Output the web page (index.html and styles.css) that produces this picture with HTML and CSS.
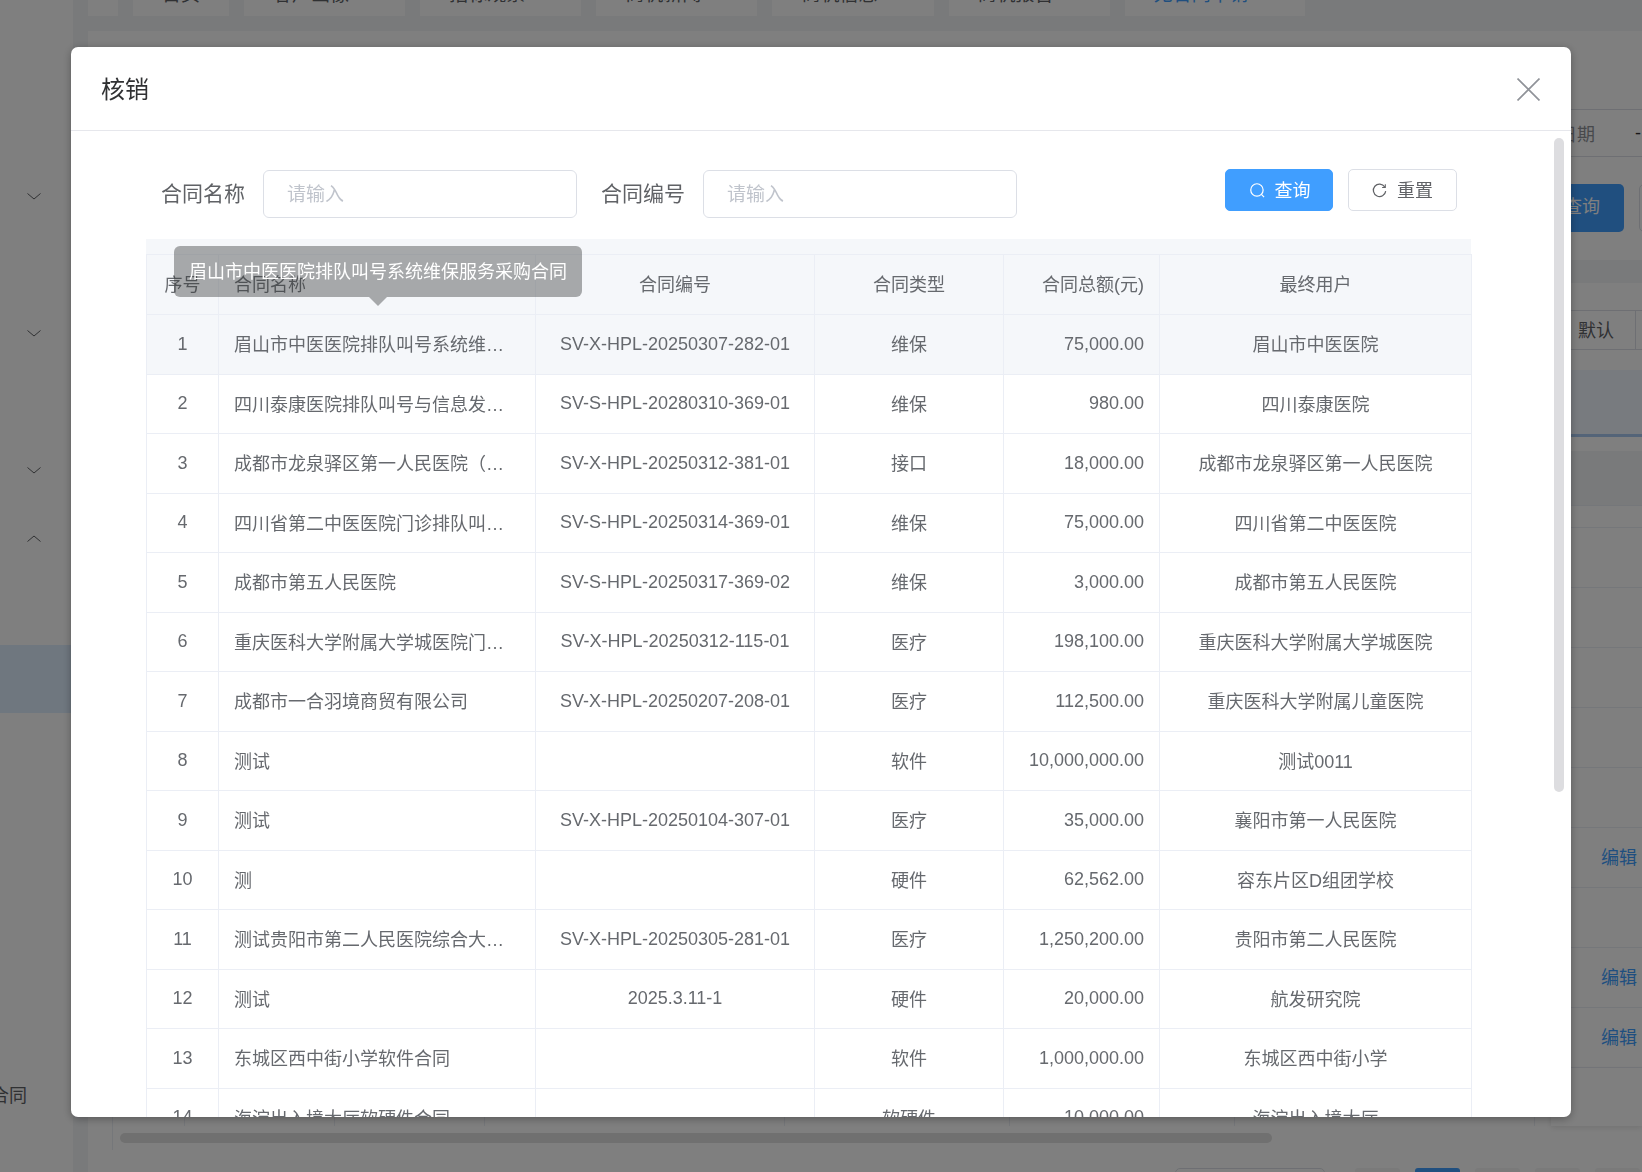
FILE: index.html
```html
<!DOCTYPE html>
<html lang="zh-CN">
<head>
    <meta charset="UTF-8">
    <title>核销</title>
    <link rel="stylesheet" href="styles.css">
</head>
<body>
    <div class="page">
        <aside class="side">
            <div class="menu-item"><svg class="chevron" viewBox="0 0 14 7"><path d="M0.5 0.5 L7 6 L13.5 0.5"/></svg></div>
            <div class="menu-item"></div>
            <div class="menu-item"><svg class="chevron" viewBox="0 0 14 7"><path d="M0.5 0.5 L7 6 L13.5 0.5"/></svg></div>
            <div class="menu-item"></div>
            <div class="menu-item"><svg class="chevron" viewBox="0 0 14 7"><path d="M0.5 0.5 L7 6 L13.5 0.5"/></svg></div>
            <div class="menu-item"><svg class="chevron" viewBox="0 0 14 7"><path d="M0.5 6.5 L7 1 L13.5 6.5"/></svg></div>
            <div class="menu-item"></div>
            <div class="menu-item menu-active"></div>
            <div class="menu-text"><span>合同</span></div>
        </aside>
        <main class="main">
            <div class="tabs">
                <div class="tab tab-arrow">‹</div>
                <div class="tab">首页</div>
                <div class="tab">客户画像<span class="tab-close">×</span></div>
                <div class="tab">招标观察<span class="tab-close">×</span></div>
                <div class="tab">商机新闻<span class="tab-close">×</span></div>
                <div class="tab">商机信息<span class="tab-close">×</span></div>
                <div class="tab">商机报告<span class="tab-close">×</span></div>
                <div class="tab tab-active">无合同申请<span class="tab-close">×</span></div>
            </div>
            <section class="panel">
                <div class="filter-row">
                    <span class="date-box"><span class="date-label">日期</span><span class="date-dash">-</span></span>
                </div>
                <div class="action-row">
                    <span class="back-btn">查询</span>
                    <span class="back-btn-plain"></span>
                </div>
                <div class="band"></div>
                <div class="list">
                    <div class="list-head"><span class="list-head-cell">默认</span></div>
                    <div class="list-selected"></div>
                    <div class="list-dark"></div>
                    <div class="list-gap"></div>
                    <div class="list-row"></div>
                    <div class="list-row"></div>
                    <div class="list-row"></div>
                    <div class="list-row"></div>
                    <div class="list-row"></div>
                    <div class="list-row"><a class="edit">编辑</a></div>
                    <div class="list-row"></div>
                    <div class="list-row"><a class="edit">编辑</a></div>
                    <div class="list-row"><a class="edit">编辑</a></div>
                    <div class="list-foot">
                        <i style="width:72px"></i><i style="width:150px"></i><i style="width:150px"></i><i style="width:300px"></i><i style="width:225px"></i><i style="width:225px"></i><i style="width:300px"></i>
                        <span class="fixed-col"></span>
                    </div>
                    <div class="hscroll"></div>
                </div>
                <div class="pager">
                    <span class="pager-select"></span>
                    <span class="pager-btn"></span>
                    <span class="pager-btn pager-on"></span>
                    <span class="pager-btn"></span>
                    <span class="pager-btn"></span>
                    <span class="pager-btn"></span>
                </div>
            </section>
        </main>
    </div>

    <div class="overlay"></div>

    <div class="dialog">
        <div class="dialog-header">
            <span class="dialog-title">核销</span>
            <svg class="dialog-close" viewBox="0 0 22 22"><path d="M0.5 0.5 L21.5 21.5 M21.5 0.5 L0.5 21.5"/></svg>
        </div>
        <div class="dialog-body">
            <form class="search-form">
                <label class="form-label">合同名称</label>
                <input class="form-input" type="text" placeholder="请输入">
                <label class="form-label form-label-next">合同编号</label>
                <input class="form-input" type="text" placeholder="请输入">
                <div class="form-buttons">
                    <button class="btn btn-primary" type="button">
                        <svg class="btn-icon" viewBox="0 0 16 16"><circle cx="7.4" cy="7.4" r="6.6"/><path d="M12.2 12.2 L15 15"/></svg><span class="btn-text">查询</span>
                    </button>
                    <button class="btn" type="button">
                        <svg class="btn-icon" viewBox="0 0 16 16"><path d="M13.6 4.2 A6.6 6.6 0 1 0 14.6 8.6"/><path class="btn-icon-tip" d="M14.2 1.4 L14.2 4.8 L10.8 4.8"/></svg><span class="btn-text">重置</span>
                    </button>
                </div>
            </form>
            <div class="table-band"></div>
            <table class="contract-table">
                <colgroup>
                    <col class="col-no"><col class="col-name"><col class="col-code"><col class="col-type"><col class="col-amount"><col class="col-user">
                </colgroup>
                <thead>
                    <tr>
                        <th>序号</th>
                        <th class="left">合同名称</th>
                        <th>合同编号</th>
                        <th>合同类型</th>
                        <th class="right">合同总额(元)</th>
                        <th>最终用户</th>
                    </tr>
                </thead>
                <tbody>
                    <tr class="is-hover"><td>1</td><td class="name">眉山市中医医院排队叫号系统维保服务采购合同</td><td>SV-X-HPL-20250307-282-01</td><td>维保</td><td class="right">75,000.00</td><td>眉山市中医医院</td></tr>
                    <tr><td>2</td><td class="name">四川泰康医院排队叫号与信息发布系统维保合同</td><td>SV-S-HPL-20280310-369-01</td><td>维保</td><td class="right">980.00</td><td>四川泰康医院</td></tr>
                    <tr><td>3</td><td class="name">成都市龙泉驿区第一人民医院（排队叫号系统）接口合同</td><td>SV-X-HPL-20250312-381-01</td><td>接口</td><td class="right">18,000.00</td><td>成都市龙泉驿区第一人民医院</td></tr>
                    <tr><td>4</td><td class="name">四川省第二中医医院门诊排队叫号系统维保合同</td><td>SV-S-HPL-20250314-369-01</td><td>维保</td><td class="right">75,000.00</td><td>四川省第二中医医院</td></tr>
                    <tr><td>5</td><td class="name">成都市第五人民医院</td><td>SV-S-HPL-20250317-369-02</td><td>维保</td><td class="right">3,000.00</td><td>成都市第五人民医院</td></tr>
                    <tr><td>6</td><td class="name">重庆医科大学附属大学城医院门诊排队叫号系统合同</td><td>SV-X-HPL-20250312-115-01</td><td>医疗</td><td class="right">198,100.00</td><td>重庆医科大学附属大学城医院</td></tr>
                    <tr><td>7</td><td class="name">成都市一合羽境商贸有限公司</td><td>SV-X-HPL-20250207-208-01</td><td>医疗</td><td class="right">112,500.00</td><td>重庆医科大学附属儿童医院</td></tr>
                    <tr><td>8</td><td class="name">测试</td><td></td><td>软件</td><td class="right">10,000,000.00</td><td>测试0011</td></tr>
                    <tr><td>9</td><td class="name">测试</td><td>SV-X-HPL-20250104-307-01</td><td>医疗</td><td class="right">35,000.00</td><td>襄阳市第一人民医院</td></tr>
                    <tr><td>10</td><td class="name">测</td><td></td><td>硬件</td><td class="right">62,562.00</td><td>容东片区D组团学校</td></tr>
                    <tr><td>11</td><td class="name">测试贵阳市第二人民医院综合大楼排队叫号系统合同</td><td>SV-X-HPL-20250305-281-01</td><td>医疗</td><td class="right">1,250,200.00</td><td>贵阳市第二人民医院</td></tr>
                    <tr><td>12</td><td class="name">测试</td><td>2025.3.11-1</td><td>硬件</td><td class="right">20,000.00</td><td>航发研究院</td></tr>
                    <tr><td>13</td><td class="name">东城区西中街小学软件合同</td><td></td><td>软件</td><td class="right">1,000,000.00</td><td>东城区西中街小学</td></tr>
                    <tr><td>14</td><td class="name">海淀出入境大厅软硬件合同</td><td></td><td>软硬件</td><td class="right">10,000.00</td><td>海淀出入境大厅</td></tr>
                </tbody>
            </table>
        </div>
        <div class="dialog-scroll"></div>
        <div class="tooltip">眉山市中医医院排队叫号系统维保服务采购合同</div>
    </div>
</body>
</html>
```

FILE: styles.css
```css
* {
    box-sizing: border-box;
}
html, body {
    margin: 0;
    height: 100%;
    overflow: hidden;
}
body {
    font-family: "Liberation Sans", "Noto Sans CJK SC", sans-serif;
    color: #606266;
}

/* page behind the dialog */
.page {
    display: flex;
    height: 1172px;
    overflow: hidden;
    background-color: #fff;
}
.side {
    width: 73px;
    flex-shrink: 0;
    padding-top: 162px;
    background-color: #fff;
}
.menu-item {
    display: flex;
    align-items: center;
    height: 68.5px;
    padding-left: 27px;
}
.menu-active {
    margin-top: 3px;
    height: 68px;
    background-color: #deeeff;
}
.menu-text {
    display: flex;
    justify-content: flex-end;
    width: 27px;
    margin-top: 368px;
    font-size: 18px;
    white-space: nowrap;
}
.menu-text span {
    flex-shrink: 0;
}
.chevron {
    width: 14px;
    height: 7px;
    fill: none;
    stroke: #606266;
    stroke-width: 1;
}
.main {
    flex: 1;
    min-width: 0;
    padding-left: 15px;
    background-color: #f2f4f7;
}
.tabs {
    display: flex;
    gap: 15px;
    margin-top: -16px;
}
.tab {
    height: 32px;
    padding: 0 29px;
    line-height: 22px;
    font-size: 19px;
    white-space: nowrap;
    background-color: #fff;
}
.tab-arrow {
    width: 30px;
    padding: 0;
    text-align: center;
}
.tab-active {
    color: #409eff;
}
.tab-close {
    margin-left: 16px;
}
.panel {
    margin-top: 15px;
    height: 1141px;
    padding-top: 78px;
    background-color: #fff;
}
.filter-row {
    display: flex;
    justify-content: flex-end;
    height: 48px;
    border-top: 1px solid #dcdfe6;
    border-bottom: 1px solid #dcdfe6;
}
.date-box {
    display: flex;
    align-items: center;
    font-size: 18px;
    color: #909399;
}
.date-label {
    width: 100px;
    margin-right: 40px;
    text-align: right;
}
.date-dash {
    width: 7px;
    color: #303133;
}
.action-row {
    display: flex;
    justify-content: flex-end;
    gap: 15px;
    margin-top: 27px;
    margin-right: -105px;
}
.back-btn, .back-btn-plain {
    display: block;
    flex-shrink: 0;
    width: 108px;
    height: 48px;
    line-height: 46px;
    padding-right: 24px;
    text-align: right;
    font-size: 18px;
    color: #fff;
    border-radius: 5px;
    background-color: #409eff;
}
.back-btn-plain {
    border: 1px solid #dcdfe6;
    background-color: #fff;
}
.band {
    height: 23px;
    margin-top: 28px;
    background-color: #f2f4f7;
}
.list {
    margin-left: 24px;
    padding-top: 27px;
    height: 867px;
    border-left: 1px solid #ebeef5;
}
.list-head {
    display: flex;
    justify-content: flex-end;
    height: 40px;
    border-top: 1px solid #dcdfe6;
    border-bottom: 1px solid #dcdfe6;
}
.list-head-cell {
    width: 58px;
    height: 38px;
    margin-right: 6px;
    line-height: 40px;
    font-size: 18px;
    border-right: 1px solid #dcdfe6;
}
.list-selected {
    height: 67px;
    margin-top: 20px;
    background-color: #f0f6ff;
    border-bottom: 3px solid #a8c8f0;
}
.list-dark {
    height: 54px;
    margin-top: 14px;
    background-color: #f2f4f7;
}
.list-gap {
    height: 22px;
    border-top: 1px solid #ebeef5;
}
.list-row {
    display: flex;
    align-items: center;
    justify-content: flex-end;
    height: 60px;
    padding: 0 5px 4px 0;
    border-top: 1px solid #ebeef5;
}
.edit {
    font-size: 18px;
    color: #409eff;
}
.list-foot {
    position: relative;
    display: flex;
    height: 58px;
    border-top: 1px solid #ebeef5;
}
.list-foot i {
    display: block;
    flex-shrink: 0;
    height: 58px;
    border-right: 1px solid #ebeef5;
}
.fixed-col {
    position: absolute;
    right: 0;
    top: 0;
    width: 91px;
    height: 58px;
    box-shadow: 0 2px 6px rgba(0, 0, 0, 0.1);
}
.hscroll {
    width: 1152px;
    height: 10px;
    margin: 8px 0 0 7px;
    border-radius: 5px;
    background-color: #e0e0e0;
}
.pager {
    display: flex;
    gap: 15px;
    margin-top: 18px;
    margin-left: 1087px;
}
.pager-select {
    width: 150px;
    height: 40px;
    margin-right: 15px;
    border: 1px solid #dcdfe6;
    border-radius: 5px;
}
.pager-btn {
    flex-shrink: 0;
    width: 45px;
    height: 40px;
    border-radius: 3px;
    background-color: #f4f4f5;
}
.pager-on {
    background-color: #409eff;
}

.overlay {
    position: fixed;
    inset: 0;
    background-color: rgba(0, 0, 0, 0.5);
}

/* dialog */
.dialog {
    position: fixed;
    left: 71px;
    top: 47px;
    width: 1500px;
    height: 1070px;
    overflow: hidden;
    border-radius: 7px;
    background-color: #fff;
    box-shadow: 0 2px 8px rgba(0, 0, 0, 0.3);
}
.dialog-header {
    display: flex;
    align-items: center;
    justify-content: space-between;
    height: 84px;
    padding: 0 31px 0 30px;
    border-bottom: 1px solid #e6e7ec;
}
.dialog-title {
    font-size: 24px;
    line-height: 30px;
    padding-top: 2px;
    color: #303133;
}
.dialog-close {
    width: 23px;
    height: 23px;
    margin-top: 1px;
    fill: none;
    stroke: #909399;
    stroke-width: 1.6;
}
.dialog-body {
    height: 986px;
    padding: 38px 0 0 75px;
    overflow: hidden;
}
.dialog-scroll {
    position: absolute;
    left: 1483px;
    top: 91px;
    width: 10px;
    height: 654px;
    border-radius: 5px;
    background-color: #dddde0;
}
.search-form {
    display: flex;
    align-items: flex-start;
    width: 1325px;
    height: 49px;
    padding: 0 14px 0 15px;
}
.form-label {
    margin: 1px 18px 0 0;
    line-height: 48px;
    font-size: 21px;
    white-space: nowrap;
}
.form-label-next {
    margin-left: 24px;
}
.form-input {
    width: 314px;
    height: 48px;
    margin-top: 1px;
    padding: 2px 23px 0;
    font-family: inherit;
    font-size: 19px;
    color: #606266;
    border: 1px solid #dcdfe6;
    border-radius: 6px;
    outline: none;
}
.form-input::placeholder {
    color: #c0c4cc;
}
.form-buttons {
    display: flex;
    gap: 15px;
    margin-left: auto;
}
.btn {
    display: flex;
    align-items: center;
    justify-content: center;
    gap: 10px;
    width: 109px;
    height: 42px;
    padding: 0;
    font-family: inherit;
    font-size: 18px;
    color: #606266;
    background-color: #fff;
    border: 1px solid #dcdfe6;
    border-radius: 5px;
    cursor: pointer;
}
.btn-text {
    margin-bottom: 2px;
}
.btn-primary {
    width: 108px;
    padding-left: 2px;
    color: #fff;
    background-color: #409eff;
    border-color: #409eff;
}
.btn-icon {
    width: 15px;
    height: 15px;
    fill: none;
    stroke: currentColor;
    stroke-width: 1.3;
}
.btn-icon-tip {
    stroke-width: 1.1;
}
.table-band {
    width: 1325px;
    height: 15px;
    margin-top: 21px;
    background-color: #f5f7fa;
}
.contract-table {
    width: 1325px;
    table-layout: fixed;
    border-collapse: collapse;
    font-size: 18px;
    color: #66696e;
}
.col-no { width: 72px; }
.col-name { width: 317px; }
.col-code { width: 279px; }
.col-type { width: 189px; }
.col-amount { width: 156px; }
.col-user { width: 312px; }
.contract-table th,
.contract-table td {
    padding: 0 15px;
    text-align: center;
    font-weight: normal;
    border: 1px solid #ebeef5;
    white-space: nowrap;
    overflow: hidden;
}
.contract-table th {
    height: 60px;
    padding-bottom: 4px;
    background-color: #f5f7fa;
}
.contract-table td {
    height: 59.5px;
}
.contract-table td:nth-child(4),
.contract-table td:nth-child(6) {
    padding-bottom: 2px;
}
.contract-table .left {
    text-align: left;
}
.contract-table .right {
    text-align: right;
}
.contract-table .name {
    padding: 0 31px 2px 15px;
    text-align: left;
    text-overflow: ellipsis;
}
.is-hover td {
    background-color: #f5f7fa;
}

/* tooltip over the first row */
.tooltip {
    position: absolute;
    left: 103px;
    top: 199px;
    width: 408px;
    height: 51px;
    line-height: 52px;
    text-align: center;
    font-size: 18px;
    color: #fff;
    white-space: nowrap;
    border-radius: 6px;
    background-color: rgba(48, 49, 51, 0.4);
}
.tooltip::after {
    content: "";
    position: absolute;
    left: 195px;
    top: 51px;
    border-top: 9px solid rgba(48, 49, 51, 0.4);
    border-left: 9px solid transparent;
    border-right: 9px solid transparent;
}
```
